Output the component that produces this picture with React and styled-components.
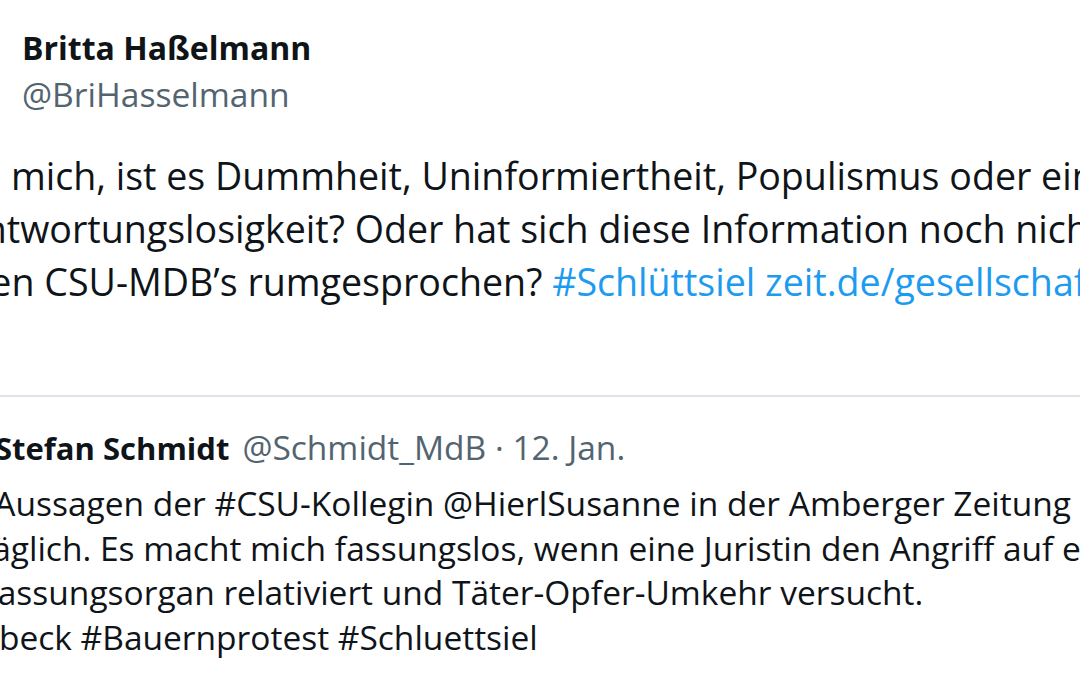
import React from 'react';
import styled, { createGlobalStyle } from 'styled-components';

// Globale Styles

const GlobalStyle = createGlobalStyle`
  html, body {
    margin: 0;
    padding: 0;
    background-color: #ffffff;
    overflow: hidden;
  }
  body {
    font-family: "Open Sans", "Noto Sans", "Liberation Sans", sans-serif;
    color: #0f1419;
  }
`

// Komponenten

const Seite = styled.div`
  width: 1080px;
  height: 675px;
  overflow: hidden;
  background-color: #ffffff;
`

const Beitrag = styled.article`
  width: 1500px;
  margin-left: -96px;
  padding-top: 26px;
`

const Kopfzeile = styled.header`
  display: flex;
  align-items: flex-start;
  gap: 30px;
`

const Avatar = styled.div`
  flex: none;
  width: ${(props) => props.$size}px;
  height: ${(props) => props.$size}px;
  border-radius: 50%;
  background-color: #cfd9de;
`

const NamenSpalte = styled.div`
  display: flex;
  flex-direction: column;
`

const Name = styled.span`
  font-weight: 700;
  font-size: 32px;
  line-height: 44px;
  color: #0f1419;
`

const Handle = styled.span`
  font-size: 33.6px;
  line-height: 48px;
  color: #536471;
`

const Text = styled.p`
  margin: 31px 0 0 0;
  font-size: 37.6px;
  line-height: 53px;
  white-space: nowrap;
  color: #0f1419;
`

const Link = styled.span`
  color: #1d9bf0;
`

const Zitat = styled.div`
  margin-top: 87px;
  border: 2px solid #dde3e8;
  border-radius: 35px;
  padding: 28px 28px;
`

const ZitatKopf = styled.div`
  display: flex;
  align-items: center;
  gap: 17px;
  white-space: nowrap;
  line-height: 44px;
`

const ZitatName = styled.span`
  font-size: 31px;
  font-weight: 700;
  color: #0f1419;
`

const Grau = styled.span`
  font-size: 33.5px;
  color: #536471;
  margin-left: 13px;
`

const ZitatText = styled.p`
  margin: 5px 0 0 0;
  font-size: 33.5px;
  line-height: 44.5px;
  white-space: nowrap;
  color: #0f1419;
`

class App extends React.Component {
  render() {
    return (
      <Seite>
        <GlobalStyle />
        <Beitrag>
          <Kopfzeile>
            <Avatar $size={88} />
            <NamenSpalte>
              <Name>Britta Haßelmann</Name>
              <Handle>@BriHasselmann</Handle>
            </NamenSpalte>
          </Kopfzeile>

          <Text>
            Frage mich, ist es Dummheit, Uninformiertheit, Populismus oder eine
            <br />
            Verantwortungslosigkeit? Oder hat sich diese Information noch nicht
            <br />
            bei den CSU-MDB’s rumgesprochen? <Link>#Schlüttsiel zeit.de/gesellschaft</Link>
          </Text>

          <Zitat>
            <ZitatKopf>
              <Avatar $size={44} />
              <div>
                <ZitatName>Stefan Schmidt</ZitatName>
                <Grau>@Schmidt_MdB · 12. Jan.</Grau>
              </div>
            </ZitatKopf>
            <ZitatText>
              Die Aussagen der #CSU-Kollegin @HierlSusanne in der Amberger Zeitung sind un
              <br />
              erträglich. Es macht mich fassungslos, wenn eine Juristin den Angriff auf ein
              <br />
              Verfassungsorgan relativiert und Täter-Opfer-Umkehr versucht.
              <br />
              #Habeck #Bauernprotest #Schluettsiel
            </ZitatText>
          </Zitat>
        </Beitrag>
      </Seite>
    );
  }
}

export default App;
